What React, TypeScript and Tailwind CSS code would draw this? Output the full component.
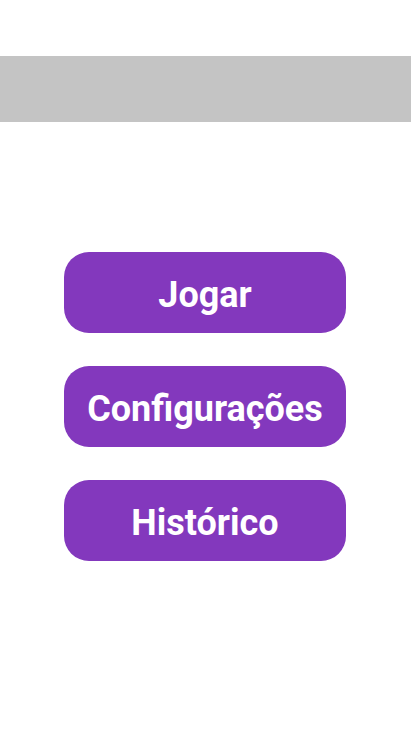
import React from "react";

export default function App() {
  const items = ["Jogar", "Configurações", "Histórico"];
  return (
    <div className="min-h-screen w-full bg-white pt-14" style={{ fontFamily: "Roboto, sans-serif" }}>
      {/* header bar */}
      <div className="h-[66px] w-full bg-[#c4c4c4]" />

      {/* menu */}
      <div className="mt-[130px] flex flex-col gap-[33px] pl-16">
        {items.map((label) => (
          <button
            key={label}
            className="h-[81px] w-[282px] rounded-[25px] bg-[#8338bd] pt-1 text-[36px] font-bold leading-none text-white"
          >
            {label}
          </button>
        ))}
      </div>
    </div>
  );
}
